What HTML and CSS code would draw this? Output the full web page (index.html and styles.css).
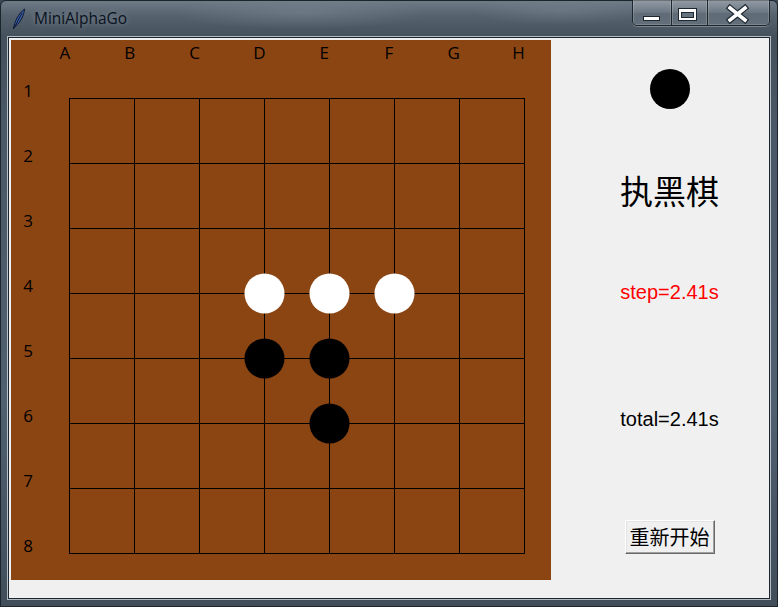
FILE: index.html
```html
<!DOCTYPE html>
<html>
<head>
<meta charset="utf-8">
<title>MiniAlphaGo</title>
<link rel="stylesheet" href="styles.css">
</head>
<body>
<div class="window">
  <div class="titlebar">
    <svg class="app-icon" width="14" height="22" viewBox="0 0 14 22">
      <path d="M1.5 20.5 C2.5 14 6 6 12.5 1 C12 7 9 13.5 3.5 18.5 Z" fill="#3a5fa8" stroke="#0d1830" stroke-width="1"/>
      <path d="M1.5 21 L10 5" stroke="#0d1830" stroke-width="1"/>
    </svg>
    <span class="title">MiniAlphaGo</span>
    <div class="caption-buttons">
      <div class="cbtn cbtn-min">
        <svg width="38" height="25" viewBox="0 0 38 25"><rect x="10.5" y="16.5" width="16" height="4" fill="#fff" stroke="#1e2730"/></svg>
      </div>
      <div class="cbtn cbtn-max">
        <svg width="35" height="25" viewBox="0 0 35 25"><rect x="6.5" y="8.5" width="18" height="12" fill="#fff" stroke="#1e2730"/><rect x="9.5" y="12.5" width="12" height="5" fill="#66727e" stroke="#1e2730"/></svg>
      </div>
      <div class="cbtn cbtn-close">
        <svg width="61" height="25" viewBox="0 0 61 25"><path d="M22 8 L37 20 M37 8 L22 20" stroke="#1e2730" stroke-width="6" stroke-linecap="square"/><path d="M22 8 L37 20 M37 8 L22 20" stroke="#fff" stroke-width="3.6" stroke-linecap="square"/></svg>
      </div>
    </div>
  </div>
  <div class="client">
    <div class="board">
      <div class="col-labels">
        <span>A</span><span>B</span><span>C</span><span>D</span><span>E</span><span>F</span><span>G</span><span>H</span>
      </div>
      <div class="row-labels">
        <span>1</span><span>2</span><span>3</span><span>4</span><span>5</span><span>6</span><span>7</span><span>8</span>
      </div>
      <svg class="grid" width="456" height="456" viewBox="0 0 456 456" shape-rendering="crispEdges">
        <g stroke="#000" stroke-width="1">
          <line x1="0.5" y1="0" x2="0.5" y2="456"/>
          <line x1="65.5" y1="0" x2="65.5" y2="456"/>
          <line x1="130.5" y1="0" x2="130.5" y2="456"/>
          <line x1="195.5" y1="0" x2="195.5" y2="456"/>
          <line x1="260.5" y1="0" x2="260.5" y2="456"/>
          <line x1="325.5" y1="0" x2="325.5" y2="456"/>
          <line x1="390.5" y1="0" x2="390.5" y2="456"/>
          <line x1="455.5" y1="0" x2="455.5" y2="456"/>
          <line y1="0.5" x1="0" y2="0.5" x2="456"/>
          <line y1="65.5" x1="0" y2="65.5" x2="456"/>
          <line y1="130.5" x1="0" y2="130.5" x2="456"/>
          <line y1="195.5" x1="0" y2="195.5" x2="456"/>
          <line y1="260.5" x1="0" y2="260.5" x2="456"/>
          <line y1="325.5" x1="0" y2="325.5" x2="456"/>
          <line y1="390.5" x1="0" y2="390.5" x2="456"/>
          <line y1="455.5" x1="0" y2="455.5" x2="456"/>
        </g>
        <g shape-rendering="auto">
          <circle cx="195.5" cy="195.5" r="20" fill="#fff"/>
          <circle cx="260.5" cy="195.5" r="20" fill="#fff"/>
          <circle cx="325.5" cy="195.5" r="20" fill="#fff"/>
          <circle cx="195.5" cy="260.5" r="20" fill="#000"/>
          <circle cx="260.5" cy="260.5" r="20" fill="#000"/>
          <circle cx="260.5" cy="325.5" r="20" fill="#000"/>
        </g>
      </svg>
    </div>
    <div class="panel">
      <div class="turn-stone"></div>
      <div class="turn-text">执黑棋</div>
      <div class="step">step=2.41s</div>
      <div class="total">total=2.41s</div>
      <button class="restart">重新开始</button>
    </div>
  </div>
</div>
</body>
</html>
```

FILE: styles.css
```css
html, body {
  margin: 0;
  padding: 0;
  overflow: hidden;
  background: #3b4651;
}

.window {
  width: 778px;
  height: 607px;
  box-sizing: border-box;
  display: flex;
  flex-direction: column;
  background:
    radial-gradient(ellipse 130px 16px at 300px 12px, rgba(140,150,162,0.35), rgba(140,150,162,0) 100%),
    radial-gradient(ellipse 90px 14px at 560px 10px, rgba(130,140,152,0.35), rgba(130,140,152,0) 100%),
    linear-gradient(180deg, #6f7b87 0px, #56636f 14px, #44505c 36px, #4a5764 120px, #516070 400px, #414e5a 607px);
  border: 1px solid #1c242c;
  border-radius: 6px 6px 0 0;
}

.titlebar {
  height: 36px;
  flex: none;
  display: flex;
  align-items: flex-start;
}

.app-icon {
  margin-left: 11px;
  margin-top: 7px;
  flex: none;
}

.title {
  margin-left: 8px;
  margin-top: 7px;
  font-family: "Open Sans", "Noto Sans", sans-serif;
  font-size: 15.5px;
  line-height: 20px;
  color: #0a1220;
  text-shadow: 0 0 6px rgba(255,255,255,0.3);
}

.caption-buttons {
  margin-left: auto;
  margin-right: 7px;
  margin-top: -1px;
  display: flex;
  height: 25px;
  border: 1px solid #1e2730;
  border-top: none;
  border-radius: 0 0 5px 5px;
  overflow: hidden;
  box-shadow: 0 1px 0 rgba(200,210,220,0.35);
}

.cbtn {
  height: 25px;
  background: linear-gradient(180deg, rgba(255,255,255,0.24) 0%, rgba(255,255,255,0.1) 50%, rgba(255,255,255,0.04) 51%, rgba(255,255,255,0.12) 100%);
  box-shadow: inset 0 0 0 1px rgba(255,255,255,0.16);
}

.cbtn svg {
  display: block;
}

.cbtn-min { width: 38px; }
.cbtn-max { width: 35px; border-left: 1px solid #1e2730; }
.cbtn-close { width: 61px; border-left: 1px solid #1e2730; }

.client {
  flex: 1;
  margin: 0 7px 7px 7px;
  background: #f0f0f0;
  border: 1px solid #1d262e;
  box-shadow: 0 0 0 1px rgba(215,225,234,0.75);
  display: flex;
  align-items: flex-start;
}

.board {
  margin: 2px 0 0 2px;
  width: 540px;
  height: 540px;
  flex: none;
  background: #8b4513;
  display: grid;
  grid-template-columns: 58px 482px;
  grid-template-rows: 58px 482px;
  font-family: "Open Sans", "DejaVu Sans", sans-serif;
  font-size: 17px;
  color: #000;
}

.col-labels {
  grid-column: 1 / 3;
  grid-row: 1;
  align-self: start;
  display: flex;
  padding-left: 21.5px;
  height: 26px;
}

.col-labels span {
  width: 65px;
  text-align: center;
  line-height: 26px;
}

.row-labels {
  grid-column: 1;
  grid-row: 1 / 3;
  justify-self: start;
  width: 34px;
  padding-top: 18px;
  display: flex;
  flex-direction: column;
}

.row-labels span {
  height: 65px;
  line-height: 65px;
  text-align: center;
}

.grid {
  grid-column: 2;
  grid-row: 2;
  display: block;
}

.panel {
  flex: 1;
  padding-left: 19px;
  display: flex;
  flex-direction: column;
  align-items: center;
}

.turn-stone {
  margin-top: 31px;
  width: 40px;
  height: 40px;
  border-radius: 50%;
  background: #000;
}

.turn-text {
  margin-top: 61px;
  font-family: "Noto Sans CJK SC", sans-serif;
  font-size: 33px;
  line-height: 40px;
  height: 40px;
  color: #000;
}

.step {
  margin-top: 71px;
  font-family: "Liberation Sans", Arial, sans-serif;
  font-size: 20px;
  line-height: 23px;
  color: #ff0000;
}

.total {
  margin-top: 104px;
  font-family: "Liberation Sans", Arial, sans-serif;
  font-size: 20px;
  line-height: 23px;
  color: #000;
}

.restart {
  margin-top: 89px;
  width: 90px;
  height: 34px;
  padding: 0;
  box-sizing: border-box;
  background: #f0f0f0;
  border: 1px solid;
  border-color: #ffffff #696969 #696969 #ffffff;
  box-shadow: inset -1px -1px 0 #a0a0a0, inset 1px 1px 0 #e3e3e3;
  font-family: "Noto Sans CJK SC", sans-serif;
  font-size: 20px;
  line-height: 30px;
  color: #000;
}
```
